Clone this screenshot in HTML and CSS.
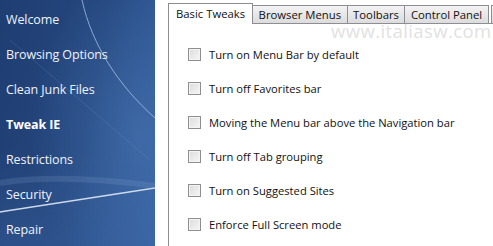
FILE: index.html
```html
<!DOCTYPE html>
<html>
<head>
<meta charset="utf-8">
<link rel="stylesheet" href="styles.css">
</head>
<body>
<div class="app">
  <nav class="sidebar">
    <svg class="swoosh" width="155" height="246" viewBox="0 0 155 246">
      <defs>
        <radialGradient id="glow" cx="0.9" cy="0.55" r="0.7">
          <stop offset="0" stop-color="#4a78b4" stop-opacity="0.55"/>
          <stop offset="1" stop-color="#4a78b4" stop-opacity="0"/>
        </radialGradient>
        <linearGradient id="low" x1="0" y1="0" x2="0" y2="1">
          <stop offset="0.6" stop-color="#3f6aa8" stop-opacity="0"/>
          <stop offset="1" stop-color="#3f6aa8" stop-opacity="0.35"/>
        </linearGradient>
      </defs>
      <rect width="155" height="246" fill="url(#glow)"/>
      <rect width="155" height="246" fill="url(#low)"/>
      <path d="M82 0 C 92 45, 118 85, 155 118" stroke="#a9c0e2" stroke-width="1" fill="none" opacity="0.8"/>
      <path d="M0 212 C 50 204, 100 197, 155 188" stroke="#dfe8f5" stroke-width="1.4" fill="none" opacity="0.9"/>
      <path d="M0 183 C 50 175, 110 180, 155 186" stroke="#8eaad4" stroke-width="6" fill="none" opacity="0.18"/>
      <path d="M10 40 L 150 160" stroke="#6f90c4" stroke-width="1" fill="none" opacity="0.25"/>
    </svg>
    <a class="item">Welcome</a>
    <a class="item">Browsing Options</a>
    <a class="item">Clean Junk Files</a>
    <a class="item active">Tweak IE</a>
    <a class="item">Restrictions</a>
    <a class="item">Security</a>
    <a class="item">Repair</a>
  </nav>
  <main class="content">
    <div class="tabs">
      <div class="tab selected">Basic Tweaks</div>
      <div class="tab">Browser Menus</div>
      <div class="tab">Toolbars</div>
      <div class="tab">Control Panel</div>
      <div class="tab stub"></div>
    </div>
    <div class="panel">
      <div class="watermark">www.italiasw.com</div>
      <label class="opt"><span class="box"></span>Turn on Menu Bar by default</label>
      <label class="opt"><span class="box"></span>Turn off Favorites bar</label>
      <label class="opt"><span class="box"></span>Moving the Menu bar above the Navigation bar</label>
      <label class="opt"><span class="box"></span>Turn off Tab grouping</label>
      <label class="opt"><span class="box"></span>Turn on Suggested Sites</label>
      <label class="opt"><span class="box"></span>Enforce Full Screen mode</label>
    </div>
  </main>
</div>
</body>
</html>
```
FILE: styles.css
```css
html, body {
  margin: 0;
  padding: 0;
  background: #fff;
  overflow: hidden;
}
.app {
  display: flex;
  width: 493px;
  height: 246px;
  overflow: hidden;
  font-family: "Open Sans", "Noto Sans", sans-serif;
}
.sidebar {
  position: relative;
  width: 155px;
  flex: none;
  background: linear-gradient(100deg, #1f3e72 0%, #25477f 55%, #3561a0 100%);
  display: flex;
  flex-direction: column;
  padding-top: 11px;
  box-sizing: border-box;
  overflow: hidden;
}
.swoosh {
  position: absolute;
  left: 0;
  top: 0;
}
.item {
  position: relative;
  flex: none;
  color: #eef3fb;
  font-size: 12.5px;
  height: 35px;
  line-height: 18px;
  padding-left: 6px;
  letter-spacing: -0.1px;
}
.item.active {
  font-weight: 700;
  color: #ffffff;
}
.content {
  flex: 1;
  min-width: 0;
  display: flex;
  flex-direction: column;
  padding-left: 13px;
  padding-top: 3px;
}
.tabs {
  display: flex;
  align-items: flex-end;
  height: 20px;
  font-size: 11.3px;
}
.tab {
  flex: none;
  height: 18px;
  line-height: 17px;
  padding: 0 5.5px;
  border: 1px solid #8c8e94;
  border-bottom: none;
  border-left: none;
  background: linear-gradient(#f3f3f3, #dcdcdc);
  color: #111;
  white-space: nowrap;
  box-sizing: border-box;
}
.tab.selected {
  height: 21px;
  line-height: 19px;
  padding: 0 7px;
  background: #fff;
  border-left: 1px solid #8c8e94;
  position: relative;
  z-index: 1;
  margin-bottom: -1px;
}
.tab.stub {
  width: 12px;
  margin-left: 2px;
  border-left: 1px solid #8c8e94;
}
.panel {
  position: relative;
  flex: 1;
  border-left: 1px solid #8c8e94;
  border-top: 1px solid #8c8e94;
  padding-top: 13px;
  padding-left: 19px;
  display: flex;
  flex-direction: column;
}
.watermark {
  position: absolute;
  left: 162px;
  top: -3px;
  font-size: 18.5px;
  line-height: 20px;
  color: #e2e2e2;
  letter-spacing: 0.4px;
}
.opt {
  position: relative;
  display: flex;
  align-items: center;
  flex: none;
  height: 34px;
  font-size: 11.2px;
  color: #111;
  white-space: nowrap;
}
.box {
  width: 11px;
  height: 11px;
  border: 1px solid #8f8f8f;
  background: linear-gradient(135deg, #dcdcdc, #f6f6f6);
  box-shadow: inset 0 0 0 1px #f4f4f4;
  margin-right: 8px;
  flex: none;
}
```
